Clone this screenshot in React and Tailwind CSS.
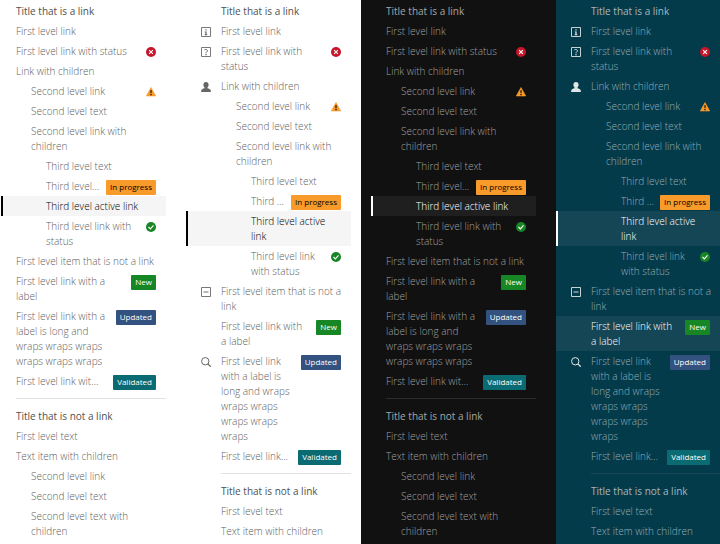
import React from 'react';
import clsx from 'clsx';

const themes = {
  light: {
    panel: 'bg-white',
    title: 'text-[#505050]',
    text: 'text-[#606060]',
    active: 'bg-[#f5f5f5] text-black',
    bar: 'border-black',
    rule: 'border-[#e2e2e2]',
    icon: 'text-[#666]',
  },
  dark: {
    panel: 'bg-[#111]',
    title: 'text-[#a6a6a6]',
    text: 'text-[#a0a0a0]',
    active: 'bg-[#1f1f1f] text-white',
    bar: 'border-white',
    rule: 'border-[#2c2c2c]',
    icon: 'text-[#ccc]',
  },
  teal: {
    panel: 'bg-[#043b4b]',
    title: 'text-[#a3b8bf]',
    text: 'text-[#93adb6]',
    active: 'bg-[#144655] text-white',
    bar: 'border-white',
    rule: 'border-[#184856]',
    icon: 'text-[#dfe6e8]',
  },
};

const labelColors = {
  'In progress': 'bg-[#f99b2a] text-black',
  New: 'bg-[#178624] text-white',
  Updated: 'bg-[#335280] text-white',
  Validated: 'bg-[#0b6b72] text-white',
};

const indents = ['', 'pl-[15px]', 'pl-[30px]'];

const sections = [
  {
    title: 'Title that is a link',
    href: '#title',
    items: [
      { text: 'First level link', href: '#', icon: 'info' },
      { text: 'First level link with status', href: '#', icon: 'help', status: 'error' },
      {
        text: 'Link with children',
        href: '#',
        icon: 'user',
        children: [
          { text: 'Second level link', href: '#', status: 'warning' },
          { text: 'Second level text' },
          {
            text: 'Second level link with children',
            href: '#',
            children: [
              { text: 'Third level text' },
              { text: 'Third level link with label', href: '#', label: 'In progress', truncate: true },
              { text: 'Third level active link', href: '#', active: true },
              { text: 'Third level link with status', href: '#', status: 'success' },
            ],
          },
        ],
      },
      { text: 'First level item that is not a link', icon: 'minus' },
      { id: 'new', text: 'First level link with a label', href: '#', label: 'New' },
      {
        text: 'First level link with a label is long and wraps wraps wraps wraps wraps wraps',
        href: '#',
        icon: 'search',
        label: 'Updated',
      },
      { text: 'First level link with a label', href: '#', label: 'Validated', truncate: true },
    ],
  },
  {
    title: 'Title that is not a link',
    items: [
      { text: 'First level text' },
      {
        text: 'Text item with children',
        children: [
          { text: 'Second level link', href: '#' },
          { text: 'Second level text' },
          { text: 'Second level text with children' },
        ],
      },
    ],
  },
];

const icons = {
  info: (
    <>
      <path d="M.8.8h14.400v14.400H.8z" fill="none" stroke="currentColor" strokeWidth="1.4" />
      <path d="M7 3.500h2v2H7zM6 7h3v4.500h1V13H6v-1.500h1V8.500H6z" fill="currentColor" />
    </>
  ),
  help: (
    <>
      <path d="M.8.8h14.400v14.400H.8z" fill="none" stroke="currentColor" strokeWidth="1.4" />
      <path d="M5.500 4.600C7.500 3.300 10.300 4 10.300 6c0 1.800-2.300 1.800-2.300 4" fill="none" stroke="currentColor" strokeWidth="1.6" />
      <path d="M7 11h2v2H7z" fill="currentColor" />
    </>
  ),
  user: (
    <path
      d="M8 0c2.600 0 4.200 1.900 4.200 4.500 0 1.900-.8 3.500-1.900 4.400v.9c2.300.6 4.700 1.400 5.200 3.200.2.900.3 2 .3 3H.2c0-1 .1-2.100.3-3 .5-1.800 2.900-2.600 5.200-3.200v-.9C4.600 8 3.800 6.400 3.800 4.500 3.800 1.900 5.400 0 8 0z"
      fill="currentColor"
    />
  ),
  minus: (
    <>
      <path d="M.8.8h14.400v14.400H.8z" fill="none" stroke="currentColor" strokeWidth="1.4" />
      <path d="M4 8h8" stroke="currentColor" strokeWidth="1.500" />
    </>
  ),
  search: (
    <>
      <circle cx="6.800" cy="6.800" r="5.900" fill="none" stroke="currentColor" strokeWidth="1.600" />
      <path d="M11 11l4.500 4.500" stroke="currentColor" strokeWidth="2" />
    </>
  ),
  error: (
    <>
      <circle cx="8" cy="8" r="8" fill="#c7162b" />
      <path d="M5 5l6 6M11 5l-6 6" stroke="#fff" strokeWidth="1.800" />
    </>
  ),
  warning: (
    <>
      <path d="M8 .8L15.500 14.300H.5z" fill="#f99b2a" stroke="#f99b2a" strokeLinejoin="round" />
      <path d="M7 5h2l-.3 5H7.300zM7 11.200h2v2H7z" fill="#000" />
    </>
  ),
  success: (
    <>
      <circle cx="8" cy="8" r="8" fill="#178624" />
      <path d="M4 8l3 3 5-5.500" fill="none" stroke="#fff" strokeWidth="1.800" />
    </>
  ),
};

const Icon = ({ name, className }) => (
  <svg viewBox="0 0 16 16" className={clsx('size-[10px] shrink-0', className)} aria-hidden="true">
    {icons[name]}
  </svg>
);

const Row = ({ item, level = 0, theme, withIcons, highlight, title }) => {
  const Tag = item.href ? 'a' : 'div';
  const lit = item.active || (highlight && item.id === highlight);

  return (
    <Tag
      href={item.href}
      aria-current={item.active ? 'page' : undefined}
      className={clsx(
        'flex items-start border-l-2 pl-[13px] pt-[3px] pb-[2px] leading-[15px]',
        item.href ? 'pr-[10px]' : 'pr-2',
        item.active ? theme.bar : 'border-transparent',
        lit ? theme.active : title ? theme.title : theme.text,
        title ? 'font-normal' : 'font-light'
      )}
    >
      {withIcons && (
        <span className="flex h-[15px] w-5 shrink-0 items-center">
          {item.icon && <Icon name={item.icon} className={theme.icon} />}
        </span>
      )}
      <span className={clsx('min-w-0 flex-1', indents[level], item.truncate && 'truncate')}>{item.text}</span>
      {item.status && (
        <span className="ml-[5px] flex h-[15px] shrink-0 items-center">
          <Icon name={item.status} />
        </span>
      )}
      {item.label && (
        <span
          className={clsx(
            '-mb-px mt-px shrink-0 rounded-[1px] px-1 pb-0.5 text-[8px] font-normal leading-[13px]',
            level === 2 ? 'ml-[5px]' : 'ml-[9px]',
            labelColors[item.label]
          )}
        >
          {item.label}
        </span>
      )}
    </Tag>
  );
};

const Items = ({ items, level = 0, ...rest }) => (
  <ul>
    {items.map((item, i) => (
      <li key={i}>
        <Row item={item} level={level} {...rest} />
        {item.children && <Items items={item.children} level={level + 1} {...rest} />}
      </li>
    ))}
  </ul>
);

const SideNav = ({ name, theme, withIcons = false, highlight }) => (
  <nav aria-label={name}>
    {sections.map((section, i) => (
      <section key={section.title}>
        {i > 0 && <hr className={clsx('my-[7px]', theme.rule, withIcons ? 'ml-[35px]' : 'ml-[15px]')} />}
        <Row item={{ text: section.title, href: section.href }} theme={theme} withIcons={withIcons} title />
        <Items items={section.items} theme={theme} withIcons={withIcons} highlight={highlight} />
      </section>
    ))}
  </nav>
);

const App = () => (
  <div className="grid h-screen grid-cols-[186fr_175fr_195fr_164fr] overflow-hidden font-['Open_Sans',sans-serif] text-[10px]">
    <div className={clsx('min-w-0 pl-px pr-5 pt-px', themes.light.panel)}>
      <SideNav name="Light" theme={themes.light} />
    </div>
    <div className={clsx('min-w-0 pr-[10px] pt-px', themes.light.panel)}>
      <SideNav name="Light with icons" theme={themes.light} withIcons />
    </div>
    <div className={clsx('min-w-0 pl-[10px] pr-5 pt-px', themes.dark.panel)}>
      <SideNav name="Dark" theme={themes.dark} />
    </div>
    <div className={clsx('min-w-0 pt-px', themes.teal.panel)}>
      <SideNav name="Teal with icons" theme={themes.teal} withIcons highlight="new" />
    </div>
  </div>
);

export default App;
